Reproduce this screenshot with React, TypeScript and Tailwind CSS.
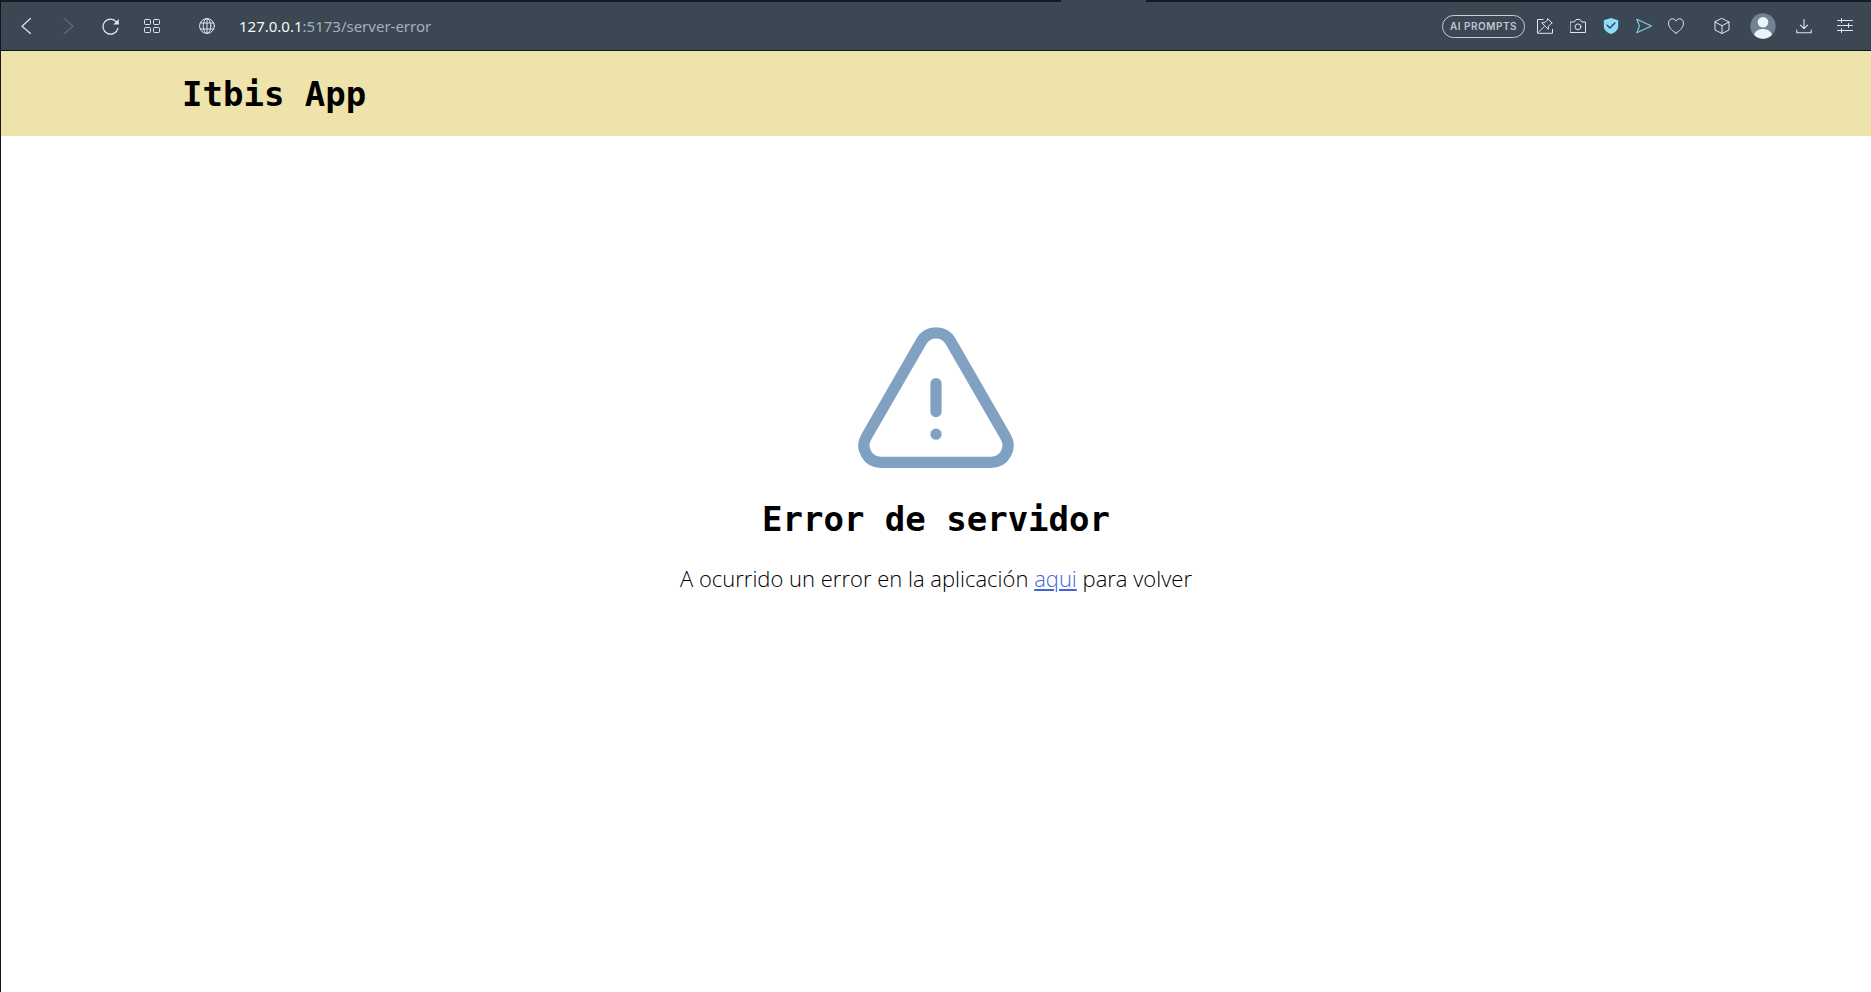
import React from "react";

type IconProps = { children: React.ReactNode; className?: string };

function Icon({ children, className = "size-4" }: IconProps) {
  return (
    <svg
      viewBox="0 0 16 16"
      fill="none"
      stroke="currentColor"
      strokeLinecap="round"
      strokeLinejoin="round"
      className={className}
      aria-hidden="true"
    >
      {children}
    </svg>
  );
}

type ToolProps = { label: string; className: string; disabled?: boolean; children: React.ReactNode };

function Tool({ label, className, disabled, children }: ToolProps) {
  return (
    <button
      type="button"
      aria-label={label}
      disabled={disabled}
      className={`flex h-12 shrink-0 items-center justify-center ${className}`}
    >
      {children}
    </button>
  );
}

function BrowserBar() {
  return (
    <div className="border-b border-[#12171b] bg-[#3b4752] text-[#dce8f0]">
      <div className="flex h-[2px]">
        <div className="w-[1060px] bg-[#141a20]" />
        <div className="w-[85px]" />
        <div className="flex-1 bg-[#141a20]" />
      </div>
      <div className="flex h-12 items-center pr-[6px] pl-1">
        <Tool label="Back" className="w-[42px]">
          <Icon>
            <path d="M12.5 0.5 4 8.2 12.5 15.5" strokeWidth="1.2" />
          </Icon>
        </Tool>
        <Tool label="Forward" className="w-[42px] text-[#5f6c78]" disabled>
          <Icon>
            <path d="M4.5 0.5 13 8.2 4.5 15.5" strokeWidth="1.2" />
          </Icon>
        </Tool>
        <Tool label="Reload" className="w-[42px]">
          <Icon className="size-[17px]">
            <path d="M15 9.7A7.1 7.1 0 1 1 13.6 3.6" strokeWidth="1.2" />
            <path d="M15.8 1v5.2h-5.2z" fill="currentColor" stroke="none" />
          </Icon>
        </Tool>
        <Tool label="Speed dial" className="w-[42px]">
          <Icon>
            <rect x="0.5" y="1.5" width="6" height="5" rx="1" />
            <rect x="9.5" y="1.5" width="6" height="5" rx="1" />
            <rect x="0.5" y="9.5" width="6" height="5" rx="1" />
            <rect x="9.5" y="9.5" width="6" height="5" rx="1" />
          </Icon>
        </Tool>
        <Tool label="Site information" className="ml-3 w-11">
          <Icon>
            <circle cx="8" cy="8" r="7.4" />
            <ellipse cx="8" cy="8" rx="3.8" ry="7.4" />
            <path d="M1.3 5h13.4M1.3 11h13.4M8 .6v14.8" />
          </Icon>
        </Tool>
        <button
          type="button"
          className="min-w-0 flex-1 truncate pl-[10px] text-left font-['Noto_Sans',sans-serif] text-[15px] leading-5 text-[#a3b0bc]"
        >
          <span className="text-[#f3f7fa]">127.0.0.1</span>:5173/server-error
        </button>
        <button
          type="button"
          className="mr-[3px] h-[23px] w-[83px] shrink-0 rounded-full border border-[#c3ced7] text-center font-[Inter,sans-serif] text-[10px] leading-5 font-semibold tracking-wider whitespace-nowrap text-[#bdc8d1]"
        >
          AI PROMPTS
        </button>
        <Tool label="Edit page" className="w-[33px]">
          <Icon>
            <path d="M6 1.5H.5v13.800h15v-4M1.8 13.900 7 8.800" />
            <path d="M10.8.8 15.2 5.2l-1.300.6-2.400 2.400-.3 3.100-6.500-6.500 3.300-.3 2.300-2.300z" />
          </Icon>
        </Tool>
        <Tool label="Snapshot" className="w-[33px]">
          <Icon>
            <path d="M.5 4h3.7L6 1.5h4L11.8 4h3.7v10.5H.5z" />
            <circle cx="8" cy="8.8" r="2.9" />
          </Icon>
        </Tool>
        <Tool label="Ad blocker" className="w-[33px] text-[#8fdafd]">
          <Icon>
            <path d="M8 0 15.2 2.2v6.3c0 3.5-3.2 6.3-7.2 7.5C4 14.8.8 12 .8 8.5V2.2z" fill="currentColor" stroke="none" />
            <path d="m4.2 7.3 2.7 2.7 5-5" stroke="#2f4457" strokeWidth="1.5" />
          </Icon>
        </Tool>
        <Tool label="Flow" className="w-[33px] text-[#85cfe2]">
          <Icon>
            <path d="M.8 1.2 15.5 8 .8 14.8 3.5 8z" strokeWidth="1.1" />
          </Icon>
        </Tool>
        <Tool label="Bookmark" className="w-8">
          <Icon>
            <path d="M8 15.2C5.5 13.5.5 10 .5 5.2.5 2.5 2.3.8 4.4.8 6.2.8 7.5 1.8 8 3.2 8.5 1.8 9.8.8 11.6.8c2.1 0 3.900 1.7 3.900 4.4 0 4.8-5 8.3-7.5 10z" />
          </Icon>
        </Tool>
        <Tool label="Extensions" className="ml-[9px] w-[41px]">
          <Icon>
            <path d="M8 .5 15 4v8l-7 3.5L1 12V4zM1 4l7 3.7L15 4M8 7.7v7.8" />
          </Icon>
        </Tool>
        <Tool label="Profile" className="w-[41px]">
          <svg viewBox="0 0 26 26" className="size-[26px]" aria-hidden="true">
            <circle cx="13" cy="13" r="12.7" fill="#728292" />
            <circle cx="13" cy="9.2" r="5.3" fill="#eaf4fb" />
            <path d="M4 21.7c1.2-3.6 4.7-5.7 9-5.7s7.8 2.1 9 5.7A12.5 12.5 0 0 1 13 25.7a12.5 12.5 0 0 1-9-4z" fill="#eaf4fb" />
          </svg>
        </Tool>
        <Tool label="Downloads" className="w-[41px]">
          <Icon>
            <path d="M8 1.5v9M4.5 7.2 8 10.7l3.5-3.5M.8 12v2.7h14.4V12" strokeWidth="1.1" />
          </Icon>
        </Tool>
        <Tool label="Easy setup" className="w-[41px]">
          <Icon>
            <path d="M.5 2.5h15M.5 7.5h15M.5 12.5h15M4.5.5v4M11.5 5.5v4M4.5 10.5v4" />
          </Icon>
        </Tool>
      </div>
    </div>
  );
}

export default function App() {
  return (
    <div className="min-h-screen border-l border-[#161616] bg-white text-black">
      <BrowserBar />
      <header className="bg-[#eee3ab]">
        <div className="mx-auto max-w-[1536px] px-[14px] pt-[25px] pb-6">
          <p className="font-['DejaVu_Sans_Mono',monospace] text-[34px] leading-9 font-bold">Itbis App</p>
        </div>
      </header>
      <main className="flex flex-col items-center px-4 pt-[180px] text-center">
        <svg
          viewBox="0 0 24 24"
          fill="none"
          stroke="currentColor"
          strokeWidth="1.5"
          strokeLinecap="round"
          strokeLinejoin="round"
          className="size-[180px] text-[#81a1c2]"
          aria-hidden="true"
        >
          <path d="M12 9v3.75m-9.303 3.376c-.866 1.5.217 3.374 1.948 3.374h14.71c1.73 0 2.813-1.874 1.948-3.374L13.949 3.378c-.866-1.5-3.032-1.5-3.898 0L2.697 16.126ZM12 15.75h.007v.008H12v-.008Z" />
        </svg>
        <h1 className="mt-[3px] font-['DejaVu_Sans_Mono',monospace] text-[34px] leading-10 font-bold">
          Error de servidor
        </h1>
        <p className="mt-[23px] font-['Open_Sans',sans-serif] text-[22px] leading-8 font-light">
          A ocurrido un error en la aplicación{" "}
          <a href="/" className="text-[#3f66d8] underline">
            aqui
          </a>{" "}
          para volver
        </p>
      </main>
    </div>
  );
}
